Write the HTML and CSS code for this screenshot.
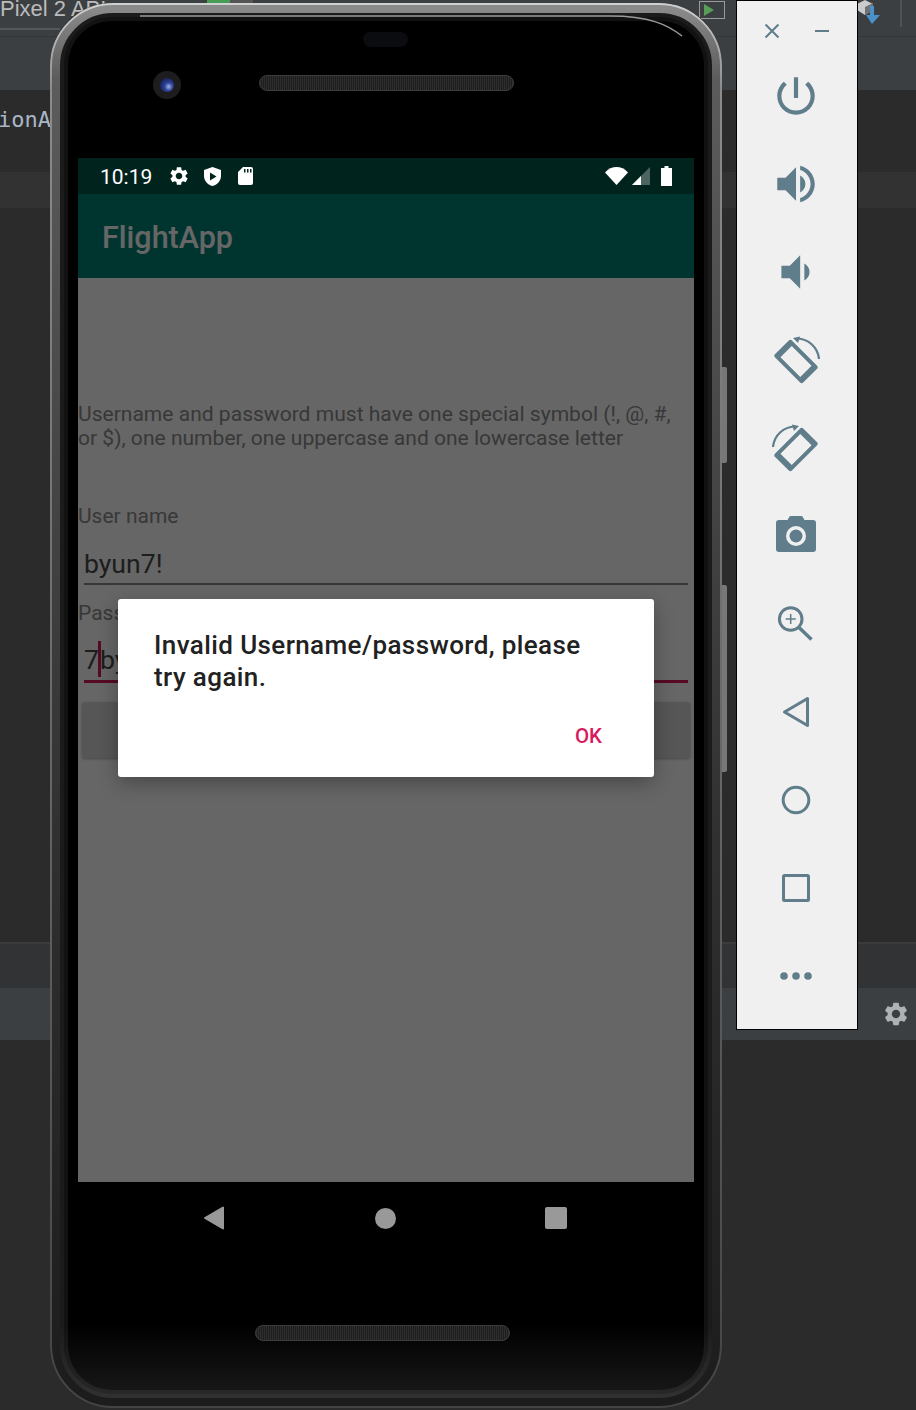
FILE: index.html
```html
<!DOCTYPE html>
<html>
<head>
<meta http-equiv="Content-Type" content="text/html; charset=utf-8"/>
<title>FlightApp</title>
<link rel="stylesheet" href="styles.css">
</head>
<body>

<!-- IDE behind the emulator -->
<div class="ide">
  <div class="band band-tabs"><span class="device-name">Pixel 2 API</span></div>
  <div class="band band-toolbar"></div>
  <div class="band band-editor"><span class="code-text">ionA</span></div>
  <div class="band band-gutter"></div>
  <div class="band band-main"></div>
  <div class="band band-tool"></div>
  <div class="band band-status">
    <svg class="ide-gear" viewBox="0 0 24 24"><use href="#gear"/></svg>
  </div>
  <div class="band band-rest"></div>
</div>

<div class="tb-green"></div>
<div class="tb-gray"></div>
<div class="tb-play"><svg viewBox="0 0 10 12"><path d="M0 0L10 6L0 12Z"/></svg></div>
<svg class="tb-sync" viewBox="0 0 28 25">
  <path fill="#c9cbcd" d="M0 4L8 0L16 4V10L8 15L0 10Z"/>
  <path fill="#6f7274" d="M8 7L16 3V10L8 15Z"/>
  <path fill="#4a90c9" d="M14 6H18V15H24L16 24L10 15H14Z" transform="translate(-1 0)"/>
</svg>
<div class="tb-sep"></div>

<!-- emulator -->
<div class="phone">
  <div class="side-key key-power"></div>
  <div class="side-key key-volume"></div>

  <div class="bezel-top">
    <div class="sensor"></div>
    <div class="camera"><div class="lens"></div></div>
    <div class="speaker speaker-top"></div>
  </div>

  <div class="screen">
    <div class="statusbar">
      <div class="status-left">
        <span class="clock">10:19</span>
        <svg class="st-gear" viewBox="0 0 24 24"><use href="#gear"/></svg>
        <svg class="st-shield" viewBox="0 0 17 19"><path fill-rule="evenodd" d="M8.5 0L17 3V9C17 14 13 18 8.5 19C4 18 0 14 0 9V3ZM6 5.5V13.5L12.5 9.5Z"/></svg>
        <svg class="st-sd" viewBox="0 0 15 18"><path fill-rule="evenodd" d="M5 0H13A2 2 0 0 1 15 2V16A2 2 0 0 1 13 18H2A2 2 0 0 1 0 16V5ZM6 2V5.500H7.500V2ZM9 2V5.500H10.500V2ZM12 2V5.500H13.500V2Z"/></svg>
      </div>
      <div class="status-right">
        <svg class="st-wifi" viewBox="0 0 23 18"><path d="M0 5.500C6.500 -1.800 16.500 -1.800 23 5.500L11.500 18Z"/></svg>
        <svg class="st-signal" viewBox="0 0 18 18"><path fill-opacity=".3" d="M18 0V18H0Z"/><path d="M9 9V18H0Z"/></svg>
        <svg class="st-battery" viewBox="0 0 11 20"><path d="M3.500 0H7.500V2H11V20H0V2H3.500Z"/></svg>
      </div>
    </div>
    <div class="appbar">FlightApp</div>
    <div class="content">
      <p class="hint">Username and password must have one special symbol (!, @, #, or $), one number, one uppercase and one lowercase letter</p>
      <label class="field-label label-user">User name</label>
      <div class="input input-user">byun7!</div>
      <label class="field-label label-pass">Password</label>
      <div class="input input-focus"><span>7</span><i class="caret"></i><span>byun7!</span></div>
      <div class="login-btn"></div>
    </div>
    <div class="scrim"></div>
    <div class="dialog">
      <p class="dialog-msg">Invalid Username/password, please try again.</p>
      <div class="dialog-actions"><span class="dialog-ok">OK</span></div>
    </div>
  </div>

  <div class="bezel-bottom">
    <div class="navbar">
      <svg class="nav-back" viewBox="0 0 22 24"><path d="M20 1.500V22.500L2 12Z" stroke="#999" stroke-width="2" stroke-linejoin="round"/></svg>
      <div class="nav-home"></div>
      <div class="nav-recent"></div>
    </div>
    <div class="speaker speaker-bottom"></div>
  </div>

  <svg class="rim" viewBox="0 0 672 1405">
    <defs>
      <linearGradient id="rimGrad" x1="0" y1="0" x2="0" y2="1">
        <stop offset="0" stop-color="#d0d0d0"/>
        <stop offset=".06" stop-color="#8c8c8c"/>
        <stop offset=".5" stop-color="#6a6a6a"/>
        <stop offset="1" stop-color="#444"/>
      </linearGradient>
      <linearGradient id="rimWide" x1="0" y1="0" x2="0" y2="1">
        <stop offset="0" stop-color="#8a8a8a"/>
        <stop offset=".05" stop-color="#5c5c5c"/>
        <stop offset=".6" stop-color="#303030"/>
        <stop offset="1" stop-color="#1c1c1c"/>
      </linearGradient>
    </defs>
    <rect x="5.500" y="5.500" width="661" height="1394" rx="57" fill="none" stroke="url(#rimWide)" stroke-width="9"/>
    <rect x="1" y="1" width="670" height="1403" rx="62" fill="none" stroke="url(#rimGrad)" stroke-width="2"/>
    <path class="glint" d="M90 13H560C600 13 618 22 632 33"/>
  </svg>
</div>

<!-- emulator side toolbar -->
<div class="panel">
  <div class="panel-top">
    <svg class="win-btn" viewBox="0 0 16 16"><path d="M1.500 1.500L14.500 14.500M14.500 1.500L1.500 14.500"/></svg>
    <svg class="win-btn" viewBox="0 0 16 16"><path d="M1 8H15"/></svg>
  </div>
  <div class="tool">
    <svg class="mat" viewBox="0 0 24 24"><path d="M13 3h-2v10h2V3zm4.830 2.170l-1.420 1.420C17.990 7.860 19 9.810 19 12c0 3.870-3.130 7-7 7s-7-3.130-7-7c0-2.190 1.010-4.140 2.580-5.420L6.170 5.170C4.230 6.820 3 9.260 3 12c0 4.970 4.030 9 9 9s9-4.030 9-9c0-2.740-1.230-5.180-3.170-6.830z"/></svg>
  </div>
  <div class="tool">
    <svg class="mat" viewBox="0 0 24 24"><path d="M3 9v6h4l5 5V4L7 9H3zm13.500 3c0-1.770-1.020-3.290-2.500-4.030v8.050c1.480-.73 2.500-2.250 2.500-4.020zM14 3.230v2.060c2.890.86 5 3.540 5 6.710s-2.110 5.850-5 6.710v2.060c4.010-.91 7-4.490 7-8.770s-2.990-7.860-7-8.770z"/></svg>
  </div>
  <div class="tool">
    <svg class="mat" viewBox="0 0 24 24"><path d="M18.500 12c0-1.770-1.020-3.290-2.500-4.030v8.050c1.480-.73 2.500-2.250 2.500-4.020zM5 9v6h4l5 5V4L9 9H5z"/></svg>
  </div>
  <div class="tool">
    <svg class="ico" viewBox="-24 -24 48 48">
      <path fill-rule="evenodd" transform="translate(0 1.500) rotate(45)" d="M-17.500 -12H17.500A2.500 2.500 0 0 1 20 -9.500V9.500A2.500 2.500 0 0 1 17.500 12H-17.500A2.500 2.500 0 0 1 -20 9.500V-9.500A2.500 2.500 0 0 1 -17.500 -12ZM-14 -8V8H14V-8Z"/>
      <path class="arc" d="M1 -21.500A22.500 22.500 0 0 1 23 -1"/>
      <path d="M-3 -22L4 -23.500L2 -17Z"/>
    </svg>
  </div>
  <div class="tool">
    <svg class="ico" viewBox="-24 -24 48 48">
      <g transform="scale(-1 1)">
        <path fill-rule="evenodd" transform="translate(0 1.500) rotate(45)" d="M-17.500 -12H17.500A2.500 2.500 0 0 1 20 -9.500V9.500A2.500 2.500 0 0 1 17.500 12H-17.500A2.500 2.500 0 0 1 -20 9.500V-9.500A2.500 2.500 0 0 1 -17.500 -12ZM-14 -8V8H14V-8Z"/>
        <path class="arc" d="M1 -21.500A22.500 22.500 0 0 1 23 -1"/>
        <path d="M-3 -22L4 -23.500L2 -17Z"/>
      </g>
    </svg>
  </div>
  <div class="tool">
    <svg class="ico" viewBox="0 0 48 48">
      <path d="M15 9L17.500 4.500Q18 4 19 4H29Q30 4 30.500 4.500L33 9Z"/>
      <rect x="4" y="8" width="40" height="32" rx="3"/>
      <circle cx="24" cy="24" r="10" fill="#f0f0f0"/>
      <circle cx="24" cy="24" r="6.500"/>
    </svg>
  </div>
  <div class="tool">
    <svg class="ico line" viewBox="0 0 48 48">
      <circle cx="18.700" cy="19" r="11.300"/>
      <path d="M27 27.500L39.500 39.500" stroke-width="3.500"/>
      <path d="M13.700 19H23.700M18.700 14V24" stroke-width="1.500"/>
    </svg>
  </div>
  <div class="tool">
    <svg class="ico line" viewBox="0 0 48 48"><path d="M12.500 24L35.500 10.500V37.500Z"/></svg>
  </div>
  <div class="tool">
    <svg class="ico line" viewBox="0 0 48 48"><circle cx="24" cy="24" r="12.800"/></svg>
  </div>
  <div class="tool">
    <svg class="ico line" viewBox="0 0 48 48"><rect x="11.500" y="11.500" width="25" height="25" rx="1"/></svg>
  </div>
  <div class="tool">
    <svg class="ico" viewBox="0 0 48 48"><circle cx="12" cy="24" r="3.800"/><circle cx="24" cy="24" r="3.800"/><circle cx="36" cy="24" r="3.800"/></svg>
  </div>
</div>

<svg class="defs" width="0" height="0">
  <symbol id="gear" viewBox="0 0 24 24">
    <path d="M19.140 12.940c.04-.3.06-.61.06-.94 0-.32-.02-.64-.07-.94l2.030-1.580c.18-.14.23-.41.12-.61l-1.920-3.320c-.12-.22-.37-.29-.59-.22l-2.390.96c-.5-.38-1.030-.7-1.620-.94l-.36-2.540c-.04-.24-.24-.41-.48-.41h-3.840c-.24 0-.43.17-.47.41l-.36 2.540c-.59.24-1.130.57-1.620.94l-2.390-.96c-.22-.08-.47 0-.59.22L2.740 8.870c-.12.21-.08.47.12.61l2.030 1.580c-.05.3-.09.63-.09.94s.02.64.07.94l-2.030 1.580c-.18.14-.23.41-.12.61l1.920 3.320c.12.22.37.29.59.22l2.390-.96c.5.38 1.030.7 1.620.94l.36 2.54c.05.24.24.41.48.41h3.840c.24 0 .44-.17.47-.41l.36-2.540c.59-.24 1.130-.56 1.620-.94l2.390.96c.22.08.47 0 .59-.22l1.920-3.320c.12-.22.07-.47-.12-.61l-2.010-1.580zM12 15.600c-1.980 0-3.600-1.620-3.600-3.600s1.620-3.600 3.600-3.600 3.600 1.620 3.600 3.600-1.620 3.600-3.600 3.600z"/>
  </symbol>
</svg>

</body>
</html>
```

FILE: styles.css
```css
html, body {
  margin: 0;
  padding: 0;
  height: 100%;
  overflow: hidden;
}

body {
  position: relative;
  width: 916px;
  height: 1410px;
  background-color: #2b2b2b;
  font-family: Roboto, sans-serif;
}

/* IDE bands */
.ide {
  display: flex;
  flex-direction: column;
  height: 1410px;
}

.band {
  flex: none;
  overflow: hidden;
}

.band-tabs {
  height: 37px;
  background-color: #3c3f41;
  box-shadow: inset 0 -1px 0 #333537;
}

.band-toolbar {
  height: 53px;
  background-color: #3c3f41;
  border-top: 0;
}

.band-editor {
  height: 82px;
  background-color: #2b2b2b;
}

.band-gutter {
  height: 36px;
  background-color: #323232;
}

.band-main {
  height: 734px;
  background-color: #2b2b2b;
}

.band-tool {
  height: 46px;
  background-color: #313335;
  box-sizing: border-box;
  border-top: 2px solid #393b3d;
}

.band-status {
  height: 52px;
  background-color: #3c3f41;
  display: flex;
  justify-content: flex-end;
  align-items: center;
  padding-right: 6px;
}

.band-rest {
  height: 370px;
  background-color: #2b2b2b;
}

.device-name {
  display: block;
  width: 60px;
  white-space: nowrap;
  font-family: "Liberation Sans", sans-serif;
  font-size: 22px;
  line-height: 18px;
  color: #bbbbbb;
  padding-bottom: 10px;
  border-bottom: 2px solid #555759;
}

.code-text {
  display: block;
  margin: 17px 0 0 -2px;
  font-family: "DejaVu Sans Mono", monospace;
  font-size: 22px;
  line-height: 26px;
  color: #a9b7c6;
  white-space: nowrap;
}

.ide-gear {
  width: 28px;
  height: 28px;
  fill: #afb1b3;
}

/* bits of the IDE toolbar that show round the emulator */
.tb-green {
  position: absolute;
  left: 207px;
  top: 0;
  width: 23px;
  height: 3px;
  background-color: #499c54;
}

.tb-gray {
  position: absolute;
  left: 230px;
  top: 0;
  width: 23px;
  height: 3px;
  background-color: #555;
}

.tb-play {
  position: absolute;
  left: 699px;
  top: 1px;
  width: 26px;
  height: 18px;
  box-sizing: border-box;
  border: 1px solid #9a9a9a;
  display: flex;
  align-items: center;
  padding-left: 4px;
}

.tb-play svg {
  width: 10px;
  height: 12px;
  fill: #589e58;
}

.tb-sync {
  position: absolute;
  left: 857px;
  top: 0;
  width: 28px;
  height: 25px;
}

.tb-sep {
  position: absolute;
  left: 900px;
  top: 0;
  width: 2px;
  height: 27px;
  background-color: #515151;
}

/* phone */
.phone {
  position: absolute;
  left: 50px;
  top: 3px;
  width: 672px;
  height: 1405px;
  border-radius: 62px;
  background: linear-gradient(180deg, #000 94%, #181818 99%);
  display: flex;
  flex-direction: column;
  align-items: center;
  box-shadow: inset 0 0 0 14px rgba(255, 255, 255, .04), inset 0 0 0 18px rgba(255, 255, 255, .07);
}

.rim {
  position: absolute;
  left: 0;
  top: 0;
  width: 672px;
  height: 1405px;
  pointer-events: none;
}

.glint {
  fill: none;
  stroke: #9a9a9a;
  stroke-width: 1.500;
}

.side-key {
  position: absolute;
  left: 672px;
  width: 5px;
  background-color: #777;
  border-radius: 0 2px 2px 0;
}

.key-power {
  top: 364px;
  height: 96px;
}

.key-volume {
  top: 582px;
  height: 187px;
}

.bezel-top {
  flex: none;
  position: relative;
  width: 100%;
  height: 155px;
}

.sensor {
  position: absolute;
  left: 313px;
  top: 29px;
  width: 45px;
  height: 15px;
  border-radius: 8px;
  background-color: #0b0c10;
}

.camera {
  position: absolute;
  left: 103px;
  top: 68px;
  width: 28px;
  height: 28px;
  box-sizing: border-box;
  padding: 7px;
  border-radius: 50%;
  background-color: #1d1d20;
}

.lens {
  width: 14px;
  height: 14px;
  border-radius: 50%;
  background: radial-gradient(circle at 62% 62%, #9db4ec 0, #2c3f95 35%, #0c1230 100%);
}

.speaker {
  height: 16px;
  box-sizing: border-box;
  border: 1px solid #3c3c3c;
  border-radius: 8px;
  background: repeating-linear-gradient(90deg, #2e2e2e 0, #2e2e2e 1px, #1e1e1e 1px, #1e1e1e 2px);
}

.speaker-top {
  position: absolute;
  left: 209px;
  top: 72px;
  width: 255px;
}

.speaker-bottom {
  width: 255px;
  margin: 71px auto 0;
  transform: translateX(-4px);
}

.screen {
  flex: none;
  position: relative;
  width: 616px;
  height: 1024px;
  background-color: #ffffff;
  display: flex;
  flex-direction: column;
  overflow: hidden;
}

.scrim {
  position: absolute;
  inset: 0;
  z-index: 1;
  background-color: rgba(0, 0, 0, .6);
}

.statusbar {
  flex: none;
  height: 36px;
  background-color: #00574b;
  box-sizing: border-box;
  padding: 0 22px;
  display: flex;
  align-items: center;
  justify-content: space-between;
  fill: #fff;
  color: #fff;
}

.status-left, .status-right {
  position: relative;
  z-index: 2;
  display: flex;
  align-items: center;
}

.clock {
  font-size: 21px;
  width: 68px;
  padding-top: 2px;
}

.st-gear {
  width: 22px;
  height: 22px;
  margin-right: 14px;
}

.st-shield {
  width: 17px;
  height: 19px;
  margin-right: 17px;
}

.st-sd {
  width: 15px;
  height: 18px;
}

.st-wifi {
  width: 23px;
  height: 18px;
  margin-right: 4px;
}

.st-signal {
  width: 18px;
  height: 18px;
  margin-right: 11px;
}

.st-battery {
  width: 11px;
  height: 20px;
}

.appbar {
  flex: none;
  height: 84px;
  background-color: #008577;
  color: #fff;
  font-size: 30.500px;
  font-weight: 500;
  line-height: 88px;
  padding-left: 24px;
}

.content {
  flex: 1;
  display: flex;
  flex-direction: column;
  padding: 124px 6px 0 0;
}

.hint {
  margin: 0;
  font-size: 21.050px;
  line-height: 24px;
  color: #8c8c8c;
}

.field-label {
  display: block;
  font-size: 21px;
  line-height: 24px;
  color: #8c8c8c;
}

.label-user {
  margin-top: 54px;
}

.label-pass {
  margin-top: 16px;
}

.input {
  margin-left: 6px;
  box-sizing: border-box;
  border-bottom: 2px solid #888;
  font-size: 26.600px;
  line-height: 44px;
  color: #4a4a4a;
  white-space: nowrap;
  display: flex;
}

.input-user {
  height: 57px;
  padding-top: 14px;
}

.input-focus {
  height: 58px;
  padding-top: 13px;
  border-bottom: 3px solid #d81b60;
}

.caret {
  display: block;
  flex: none;
  width: 3px;
  height: 36px;
  margin: 3px -1px 0 -1px;
  background-color: #d81b60;
}

.login-btn {
  height: 56px;
  margin: 19px -2px 0 4px;
  border-radius: 3px;
  background-color: #d6d7d7;
  box-shadow: 0 1px 3px rgba(0, 0, 0, .3);
}

.dialog {
  position: absolute;
  z-index: 3;
  left: 40px;
  top: 441px;
  width: 536px;
  height: 178px;
  box-sizing: border-box;
  padding: 30px 60px 0 36px;
  background-color: #fff;
  border-radius: 3px;
  box-shadow: 0 6px 20px rgba(0, 0, 0, .3);
  display: flex;
  flex-direction: column;
}

.dialog-msg {
  margin: 0;
  font-size: 26px;
  font-weight: 500;
  letter-spacing: .4px;
  line-height: 32px;
  color: #212121;
}

.dialog-actions {
  display: flex;
  justify-content: flex-end;
  margin: 29px -8px 0 0;
}

.dialog-ok {
  font-size: 20.500px;
  font-weight: 500;
  line-height: 28px;
  color: #d81b60;
}

.bezel-bottom {
  flex: 1;
  width: 100%;
  display: flex;
  flex-direction: column;
}

.navbar {
  height: 72px;
  box-sizing: border-box;
  padding-right: 2px;
  display: flex;
  align-items: center;
  justify-content: center;
  gap: 150px;
}

.nav-back {
  width: 22px;
  height: 24px;
  fill: #999;
}

.nav-home {
  width: 21px;
  height: 21px;
  border-radius: 50%;
  background-color: #999;
}

.nav-recent {
  width: 22px;
  height: 22px;
  margin-left: -1px;
  border-radius: 2px;
  background-color: #999;
}

/* side toolbar */
.panel {
  position: absolute;
  left: 736px;
  top: 0;
  width: 122px;
  height: 1030px;
  box-sizing: border-box;
  border: 1px solid #000;
  background-color: #f0f0f0;
  padding-right: 2px;
  display: flex;
  flex-direction: column;
  align-items: center;
  stroke: none;
  fill: #607d8b;
}

.panel-top {
  height: 51px;
  width: 100%;
  box-sizing: border-box;
  padding: 8px 0 0 2px;
  display: flex;
  align-items: center;
  justify-content: center;
  gap: 34px;
}

.win-btn {
  width: 16px;
  height: 16px;
  fill: none;
  stroke: #607d8b;
  stroke-width: 2;
}

.tool {
  flex: none;
  height: 88px;
  display: flex;
  align-items: center;
  justify-content: center;
}

.mat {
  width: 50px;
  height: 50px;
}

.ico {
  width: 48px;
  height: 48px;
}

.arc {
  fill: none;
  stroke: #607d8b;
  stroke-width: 2.200;
}

.line {
  fill: none;
  stroke: #607d8b;
  stroke-width: 3;
  stroke-linejoin: round;
}

.defs {
  position: absolute;
}
```
